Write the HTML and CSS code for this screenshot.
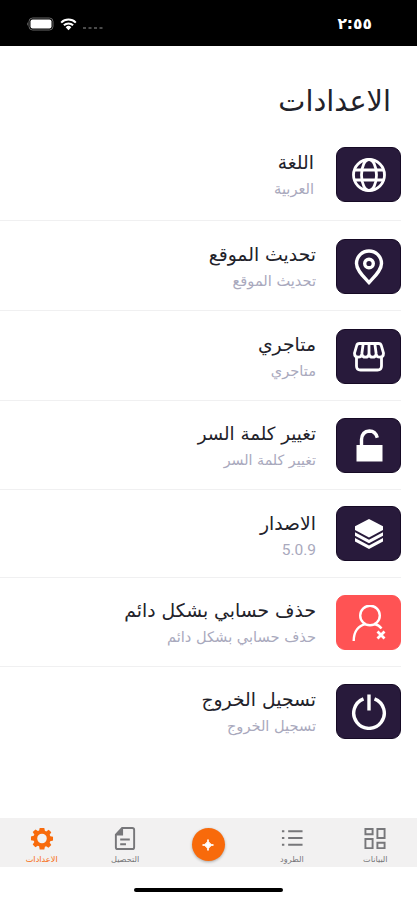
FILE: index.html
```html
<!DOCTYPE html>
<html lang="ar" dir="rtl">
  <head>
    <meta charset="UTF-8" />
    <meta name="viewport" content="width=device-width, initial-scale=1.0" />
    <title>الاعدادات</title>
    <link rel="stylesheet" href="styles.css">
  </head>
  <body>
    <!-- status bar -->
    <div class="statusbar">
      <div class="time" dir="ltr">٢:٥٥</div>
      <div class="status-icons">
        <svg class="dots" viewBox="0 0 20 4"><path d="M0 1h3v2H0zM5.5 1h3v2h-3zM11 1h3v2h-3zM16.500 1h3v2h-3z" /></svg>
        <svg class="wifi" viewBox="0 0 17 13">
          <path d="M1.200 4.600a10.400 10.400 0 0 1 14.600 0M3.900 7.300a6.600 6.600 0 0 1 9.200 0" />
          <path class="solid" d="M5.700 9.200a4 4 0 0 1 5.600 0L8.500 12.300z" />
        </svg>
        <svg class="battery" viewBox="0 0 28 14">
          <rect class="case" x="3" y="1" width="24" height="12" rx="3.500" />
          <rect x="4.500" y="2.500" width="21" height="9" rx="2" />
          <path class="cap" d="M2 5v4q-1.700-2 0-4z" />
        </svg>
      </div>
    </div>

    <h1>الاعدادات</h1>

    <div class="list">
      <div class="row first">
        <div class="tile">
          <svg viewBox="0 0 36 36">
            <circle cx="18" cy="18" r="15.500" />
            <ellipse cx="18" cy="18" rx="7.500" ry="15.500" />
            <path d="M4 13h28M4 23h28" />
          </svg>
        </div>
        <div class="text">
          <div class="name">اللغة</div>
          <div class="desc">العربية</div>
        </div>
      </div>
      <div class="row">
        <div class="tile">
          <svg viewBox="0 0 36 36">
            <path class="thick" d="M18 33.500C12.500 27.500 5.500 21.500 5.500 14.500a12.500 12.500 0 0 1 25 0C30.500 21.500 23.500 27.500 18 33.500z" />
            <circle class="thick" cx="18" cy="14.500" r="4.300" />
          </svg>
        </div>
        <div class="text">
          <div class="name">تحديث الموقع</div>
          <div class="desc">تحديث الموقع</div>
        </div>
      </div>
      <div class="row">
        <div class="tile">
          <svg viewBox="0 0 36 36">
            <path d="M5.500 17.500V27q0 4 4 4h17q4 0 4-4v-9.500" />
            <path d="M8.500 4.500h19q2.300 0 2.900 2.300l2.100 7.400q0 4-3.600 4t-3.700-3.200q-.4 3.200-3.600 3.200T18 15q-.4 3.200-3.600 3.200T10.800 15q-.1 3.200-3.700 3.200t-3.600-4l2.100-7.400q.6-2.300 2.900-2.300z" />
            <path d="M12.200 4.500L10.800 15M18 4.500V15M23.800 4.500L25.200 15" />
          </svg>
        </div>
        <div class="text">
          <div class="name">متاجري</div>
          <div class="desc">متاجري</div>
        </div>
      </div>
      <div class="row lock">
        <div class="tile">
          <svg viewBox="0 0 36 36">
            <path class="solid" d="M5.500 17h26v16.500h-26z" />
            <path class="thick" d="M10.500 17v-5.500q.5-8 8-8.500 6 0 7.800 6.800" />
          </svg>
        </div>
        <div class="text">
          <div class="name">تغيير كلمة السر</div>
          <div class="desc">تغيير كلمة السر</div>
        </div>
      </div>
      <div class="row version">
        <div class="tile">
          <svg viewBox="0 0 36 36">
            <path class="solid" d="M18 3l14 7.300v3.600L18 21.500 4 13.900v-3.600z" />
            <path class="solid" d="M4 16.300l14 7.500 14-7.500v3.500l-14 7.500L4 19.800z" />
            <path class="solid" d="M4 21.900l14 7.500 14-7.500V25.500L18 33 4 25.500z" />
          </svg>
        </div>
        <div class="text">
          <div class="name">الاصدار</div>
          <div class="desc latin">5.0.9</div>
        </div>
      </div>
      <div class="row">
        <div class="tile danger">
          <svg viewBox="0 0 36 36">
            <circle cx="19" cy="10.500" r="9.800" />
            <path d="M2.700 36C2.700 26 8 20.600 14.500 19M23.500 19q4.500 1 7 4.500" />
            <path class="thick" d="M26.500 26.500l7 7M33.500 26.500l-7 7" />
          </svg>
        </div>
        <div class="text">
          <div class="name">حذف حسابي بشكل دائم</div>
          <div class="desc">حذف حسابي بشكل دائم</div>
        </div>
      </div>
      <div class="row">
        <div class="tile">
          <svg viewBox="0 0 36 36">
            <path class="thick" d="M12.500 4.800a15.300 15.300 0 1 0 11 0M18 .5v16" />
          </svg>
        </div>
        <div class="text">
          <div class="name">تسجيل الخروج</div>
          <div class="desc">تسجيل الخروج</div>
        </div>
      </div>
    </div>

    <!-- tab bar -->
    <div class="tabbar">
      <div class="tab">
        <svg viewBox="0 0 24 24"><path d="M2 2h7.500v5.500H2zM14.500 2H22v9.500h-7.500zM2 12.500h7.500V22H2zM14.500 16.500H22V22h-7.500z" /></svg>
        <span>البيانات</span>
      </div>
      <div class="tab">
        <svg viewBox="0 0 24 24"><path d="M8 4.500h15M8 11.500h15M8 18.500h15M1.500 4.500h2.500M1.500 11.500h2.500M1.500 18.500h2.500" /></svg>
        <span>الطرود</span>
      </div>
      <div class="tab">
        <div class="add">
          <svg viewBox="0 0 12 12"><path d="M6 .5q.7 4.800 5.500 5.500-4.800.7-5.500 5.500Q5.300 6.700.5 6 5.300 5.300 6 .5z" /></svg>
        </div>
      </div>
      <div class="tab">
        <svg class="doc" viewBox="0 0 24 26">
          <path d="M9 2h10.500q2 0 2 2v18q0 2-2 2h-15q-2 0-2-2V9zM7 14h10M7 19h6" />
          <path class="fold" d="M10 1.500V10H2z" />
        </svg>
        <span>التحصيل</span>
      </div>
      <div class="tab active">
        <svg viewBox="0 0 24 24">
          <path class="gear" fill-rule="evenodd" d="M9.600 1h4.800l.6 3 1.400.6L19 2.900 21.700 5.600 20 8.200l.7 1.500 2.800.5v4l-2.900.6-.6 1.400 1.700 2.600-2.900 2.900-2.500-1.700-1.300.6-.6 2.900H9.600L9 20.100l-1.400-.6-2.500 1.700-2.800-2.900L4 15.700l-.6-1.400-2.900-.6V9.800l2.900-.6L4 7.900 2.300 5.300l2.900-2.700 2.500 1.700L9 3.700zM12 7a5 5 0 1 0 0 10 5 5 0 0 0 0-10z" />
        </svg>
        <span>الاعدادات</span>
      </div>
    </div>
    <div class="home-indicator"></div>
  </body>
</html>
```
FILE: styles.css
```css
* {
  box-sizing: border-box;
}
body {
  font-family: "DejaVu Sans", sans-serif;
  background-color: #ffffff;
  color: #22222a;
  margin: 0;
  height: 900px;
  display: flex;
  flex-direction: column;
  overflow: hidden;
}
svg {
  display: block;
  fill: none;
}

/* status bar */
.statusbar {
  height: 46px;
  flex: none;
  background: #000000;
  display: flex;
  justify-content: space-between;
  align-items: center;
  padding: 2px 45px 0 26px;
}
.time {
  color: #ffffff;
  font-size: 15.5px;
  font-weight: bold;
}
.status-icons {
  display: flex;
  align-items: center;
  gap: 6px;
}
.dots {
  width: 20px;
  height: 4px;
  margin-top: 8px;
  fill: #4a4a4a;
}
.wifi {
  width: 17px;
  height: 13px;
  stroke: #ffffff;
  stroke-width: 2;
}
.wifi .solid {
  fill: #ffffff;
  stroke: none;
}
.battery {
  width: 28px;
  height: 14px;
  fill: #ffffff;
}
.battery .case {
  fill: none;
  stroke: #666666;
}
.battery .cap {
  fill: #777777;
}

h1 {
  flex: none;
  margin: 0;
  height: 83px;
  padding: 35px 26px 0 0;
  font-size: 28.8px;
  font-weight: normal;
  line-height: 40px;
}

/* settings list */
.list {
  flex: 1;
  padding-right: 16px;
}
.row {
  display: flex;
  align-items: flex-start;
  gap: 20px;
  height: 89px;
  padding-top: 17px;
  border-bottom: 1px solid #f0f0f1;
}
.row.first {
  height: 92px;
  padding-top: 18px;
}
.row:nth-child(2),
.row:nth-child(3) {
  height: 90px;
  padding-top: 18px;
}
.row.version {
  height: 88px;
  padding-top: 16px;
}
.row:last-child {
  border-bottom: none;
}
.row.first .text {
  padding-right: 2px;
}
.tile {
  width: 65px;
  height: 55px;
  border-radius: 9px;
  background: #281a3b;
  border: 1px solid #160a25;
  display: flex;
  align-items: center;
  justify-content: center;
}
.tile svg {
  width: 36px;
  height: 36px;
  stroke: #ffffff;
  stroke-width: 2.8;
}
.tile .thick {
  stroke-width: 3.4;
}
.tile .solid {
  fill: #ffffff;
  stroke: none;
}
.tile.danger {
  background: #ff5354;
  border-color: #ff5354;
}
.tile.danger svg {
  stroke-width: 2.4;
}
.tile.danger .thick {
  stroke-width: 2.8;
}
.name {
  font-size: 18.8px;
  line-height: 32px;
  height: 32px;
}
.desc {
  font-size: 14.6px;
  line-height: 20px;
  color: #a9a9bd;
}
.lock .name {
  font-size: 18.2px;
}
.lock .desc {
  font-size: 14.2px;
}
.version .text {
  padding-top: 2px;
}
.latin {
  font-family: Roboto, sans-serif;
  font-size: 15.5px;
}

/* tab bar */
.tabbar {
  height: 49px;
  flex: none;
  display: flex;
  background: #f2f1f1;
  margin-bottom: 21px;
}
.tab {
  flex: 1;
  display: flex;
  flex-direction: column;
  align-items: center;
  padding-top: 9px;
  color: #77777a;
  font-size: 8.2px;
}
.tab svg {
  width: 24px;
  height: 24px;
  stroke: currentColor;
  stroke-width: 2;
}
.tab .doc {
  height: 26px;
  margin: -1px 0;
}
.tab .fold {
  fill: currentColor;
  stroke: none;
}
.tab span {
  line-height: 16px;
  padding-top: 1px;
}
.tab.active {
  color: #f86a0b;
}
.tab .gear {
  fill: currentColor;
  stroke: none;
}
.add {
  width: 33px;
  height: 33px;
  margin-top: 1px;
  border-radius: 50%;
  background: #f86a0b;
  box-shadow: 0 1px 3px rgba(0, 0, 0, 0.3);
  color: #ffffff;
  display: flex;
  align-items: center;
  justify-content: center;
}
.tab .add svg {
  width: 12px;
  height: 12px;
  fill: currentColor;
  stroke-width: 1;
}
.home-indicator {
  flex: none;
  width: 149px;
  height: 4px;
  border-radius: 2px;
  background: #000000;
  margin: 0 auto 8px;
}
```
